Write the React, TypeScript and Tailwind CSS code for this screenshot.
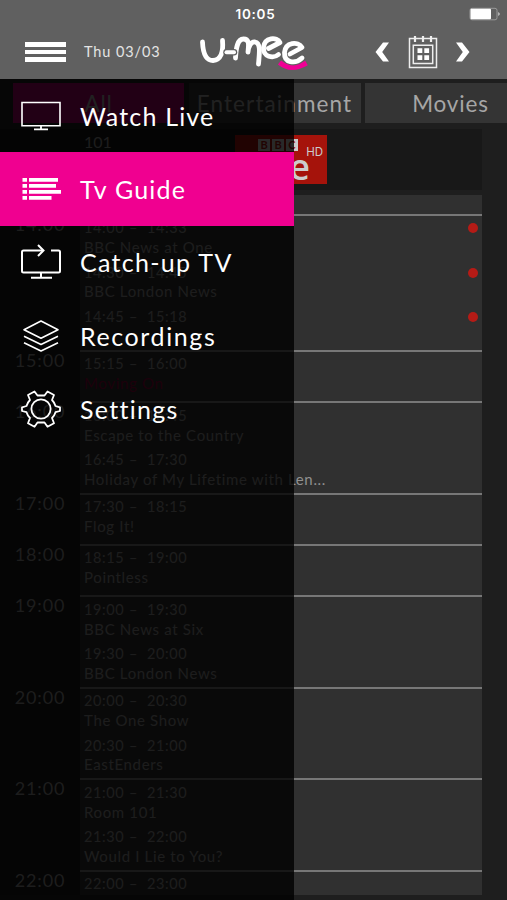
import type { ReactNode } from 'react';

interface Programme {
  start: string;
  end: string;
  title: string;
  catchUp?: boolean;
  active?: boolean;
}

interface Slot {
  hour: string;
  height: string;
  programmes: Programme[];
}

interface MenuItem {
  label: string;
  icon: ReactNode;
  tracking: string;
  active?: boolean;
}

const slots: Slot[] = [
  {
    hour: '14:00',
    height: 'h-[136px]',
    programmes: [
      { start: '14:00', end: '14:33', title: 'BBC News at One', catchUp: true },
      { start: '14:30', end: '14:45', title: 'BBC London News', catchUp: true },
      { start: '14:45', end: '15:18', title: '', catchUp: true },
    ],
  },
  {
    hour: '15:00',
    height: 'h-[51.5px]',
    programmes: [
      { start: '15:15', end: '16:00', title: 'Moving On', active: true },
    ],
  },
  {
    hour: '16:00',
    height: 'h-[91.5px]',
    programmes: [
      { start: '16:00', end: '16:45', title: 'Escape to the Country' },
      {
        start: '16:45',
        end: '17:30',
        title: 'Holiday of My Lifetime with Len...',
      },
    ],
  },
  {
    hour: '17:00',
    height: 'h-[51px]',
    programmes: [{ start: '17:30', end: '18:15', title: 'Flog It!' }],
  },
  {
    hour: '18:00',
    height: 'h-[51.5px]',
    programmes: [{ start: '18:15', end: '19:00', title: 'Pointless' }],
  },
  {
    hour: '19:00',
    height: 'h-[91.5px]',
    programmes: [
      { start: '19:00', end: '19:30', title: 'BBC News at Six' },
      { start: '19:30', end: '20:00', title: 'BBC London News' },
    ],
  },
  {
    hour: '20:00',
    height: 'h-[91.5px]',
    programmes: [
      { start: '20:00', end: '20:30', title: 'The One Show' },
      { start: '20:30', end: '21:00', title: 'EastEnders' },
    ],
  },
  {
    hour: '21:00',
    height: 'h-[91.5px]',
    programmes: [
      { start: '21:00', end: '21:30', title: 'Room 101' },
      { start: '21:30', end: '22:00', title: 'Would I Lie to You?' },
    ],
  },
  {
    hour: '22:00',
    height: 'h-[25.5px]',
    programmes: [{ start: '22:00', end: '23:00', title: '' }],
  },
];

function MonitorIcon() {
  return (
    <svg width="40" height="30" viewBox="0 0 40 30" fill="none" stroke="white">
      <path d="M1 1.5h38v23.2H1z" strokeWidth="1.6" />
      <path d="M20 25v3M13 28.3h14" strokeWidth="1.8" />
    </svg>
  );
}

function GuideIcon() {
  return (
    <svg width="40" height="24" viewBox="0 0 40 24" fill="white">
      <path d="M1.5 1H6v3.7H1.500zM8 1h29v3.700H8zM1.500 7H6v3.700H1.500zM8 7h27v3.700H8zM1.500 13H6v3.700H1.500zM8 13h32v3.700H8zM1.500 19H6v3.700H1.500zM8 19h22.500v3.700H8z" />
    </svg>
  );
}

function CatchUpIcon() {
  return (
    <svg width="40" height="36" viewBox="0 0 40 36" fill="none" stroke="white">
      <path
        d="M30 6.500h7.500q1.500 0 1.500 1.500v19q0 1.500-1.500 1.500h-35Q1 28.500 1 27V8q0-1.500 1.500-1.500H22"
        strokeWidth="2"
      />
      <path d="M17 1l5.500 5.500-5.500 5.500M20 29v4M10 33.700h21" strokeWidth="2" />
    </svg>
  );
}

function StackIcon() {
  return (
    <svg
      width="40"
      height="32"
      viewBox="0 0 40 32"
      fill="none"
      stroke="white"
      strokeWidth="1.6"
      strokeLinejoin="round"
    >
      <path d="M20 1l17 8.700-17 8.600-17-8.600z" />
      <path d="M3 16.200l17 8.300 17-8.300" />
      <path d="M3 22.700l17 8.300 17-8.300" />
    </svg>
  );
}

function GearIcon() {
  return (
    <svg
      width="40"
      height="40"
      viewBox="0 0 40 40"
      fill="none"
      stroke="white"
      strokeWidth="1.8"
      strokeLinejoin="round"
    >
      <circle cx="20" cy="20" r="9.6" />
      <path d="M16.500 6.500h7L26.500 2.500 33 6 31 11Q33.500 13.500 34.500 17L39 18.300V22L34.500 23.200Q33.500 26.500 31 29L33 34.200 26.500 37.700 23.500 33.500H16.500L13.500 37.700 7 34.200 9 29Q6.500 26.500 5.500 23.200L1 22V18.300L5.500 17Q6.500 13.500 9 11L7 6 13.500 2.500z" />
    </svg>
  );
}

function CalendarIcon() {
  return (
    <svg width="30" height="34" viewBox="0 0 30 34" fill="none" stroke="#eee">
      <path d="M1.5 3.5h27v29h-27z" strokeWidth="1.5" />
      <path d="M5.3 10.3h19.400v18.300H5.300z" strokeWidth="1.5" />
      <path d="M7 1v6M15 1v6M23 1v6" strokeWidth="2.2" />
      <path
        d="M9.500 13.200h4.800v4.800H9.500zM16.300 13.200h4.800v4.800h-4.800zM9.500 20.200h4.800v4.800H9.500zM16.300 20.200h4.800v4.800h-4.800z"
        fill="white"
        stroke="none"
      />
    </svg>
  );
}

function Logo() {
  return (
    <svg
      width="112"
      height="40"
      viewBox="0 0 112 40"
      fill="none"
      stroke="white"
      strokeWidth="4.8"
      strokeLinecap="round"
      strokeLinejoin="round"
    >
      <path d="M83.500 30.500Q95 40 110.500 31" stroke="#f00095" strokeWidth="5" strokeLinecap="butt" />
      <path d="M6.500 10C7 22 10 28.500 17 28.500C25 28 27.500 20 26.500 8.500" />
      <path d="M39.500 26C40 17 41 7 47.500 7C54 7 52.500 14 52 20C52.500 14 55 9.500 59 10C65 11 63.500 21 62.500 32" />
      <path d="M30.500 20.300h7.500" stroke="#606060" strokeWidth="6.5" />
      <path d="M30.500 20.300h7.500" strokeWidth="4" />
      <path d="M72.500 16.500L84 10.500C81 4.500 68.500 5 67.500 15.500C67 25 77 27 82.500 22.500" />
      <path
        d="M94 22L106 15.500C102 9 89.500 10 88.500 20.500C88 31 99 32.500 106 26"
        stroke="#606060"
        strokeWidth="7"
      />
      <path d="M94 22L106 15.500C102 9 89.500 10 88.500 20.500C88 31 99 32.500 106 26" />
    </svg>
  );
}

const menuItems: MenuItem[] = [
  { label: 'Watch Live', icon: <MonitorIcon />, tracking: 'tracking-[1.2px]' },
  {
    label: 'Tv Guide',
    icon: <GuideIcon />,
    tracking: 'tracking-[1.2px]',
    active: true,
  },
  { label: 'Catch-up TV', icon: <CatchUpIcon />, tracking: 'tracking-[1.3px]' },
  { label: 'Recordings', icon: <StackIcon />, tracking: 'tracking-[1.6px]' },
  { label: 'Settings', icon: <GearIcon />, tracking: 'tracking-[1.3px]' },
];

function Header() {
  return (
    <header className="h-[79px] bg-[#606060] text-white">
      <div className="grid h-7 grid-cols-3 items-center">
        <span />
        <span className="pl-1 text-center font-['Inter'] text-[13.5px] font-semibold tracking-[0.7px]">
          10:05
        </span>
        <svg className="ml-auto mr-1.5" width="32" height="14" viewBox="0 0 32 14">
          <rect x="1" y="1.3" width="27" height="11.5" rx="2" fill="none" stroke="#999" />
          <rect x="1.5" y="1.8" width="20.5" height="10.5" rx="1" fill="white" />
          <path d="M29.5 5v4q2-2 0-4" fill="white" />
        </svg>
      </div>
      <div className="flex h-[48px] items-center">
        <button
          type="button"
          aria-label="Menu"
          className="ml-[25px] flex w-[41px] flex-col gap-[3px]"
        >
          <span className="h-[4.5px] bg-white" />
          <span className="h-[4.5px] bg-white" />
          <span className="h-[4.5px] bg-white" />
        </button>
        <span className="ml-[18px] w-[112px] whitespace-nowrap text-[14.5px] tracking-[0.9px] text-[#e4e4e4]">
          Thu 03/03
        </span>
        <Logo />
        <svg className="ml-[67px]" width="14" height="20" viewBox="0 0 14 20">
          <path d="M.5 10L8 .5h6L7.200 10l6.800 9.500H8z" fill="white" />
        </svg>
        <span className="ml-[19px]">
          <CalendarIcon />
        </span>
        <svg className="ml-[18px]" width="14" height="20" viewBox="0 0 14 20">
          <path d="M13.500 10L6 .5H0L6.800 10 0 19.500h6z" fill="white" />
        </svg>
      </div>
    </header>
  );
}

function ProgrammeRow({ programme }: { programme: Programme }) {
  return (
    <div className="h-[44.3px] pl-1">
      <div className="flex h-[19.5px] items-center pr-1 text-[14.5px] tracking-[0.6px]">
        <span className="w-[45px]">{programme.start}</span>
        <span className="w-[18px]">–</span>
        <span>{programme.end}</span>
        {programme.catchUp && (
          <span className="ml-auto size-[10px] rounded-full bg-[#b51b16]" />
        )}
      </div>
      <div
        className={`h-[19px] whitespace-nowrap text-[15px] leading-[19px] tracking-[0.65px] ${
          programme.active ? 'text-[#8a0038]' : ''
        }`}
      >
        {programme.title}
      </div>
    </div>
  );
}

function ChannelLogo() {
  return (
    <div className="relative h-[49px] w-[92px] bg-[#a5130b] text-[#ccc]">
      <div className="flex gap-[2px] pl-[23px] pt-[4px]">
        {['B', 'B', 'C'].map((letter, i) => (
          <span
            key={i}
            className="h-[12px] w-[12px] bg-[#ccc] text-center text-[11px] font-bold leading-[12px] text-[#a5130b]"
          >
            {letter}
          </span>
        ))}
      </div>
      <div className="pr-[17px] text-right font-['Open_Sans'] text-[36px] font-semibold leading-[31px]">
        one
      </div>
      <span className="absolute right-[4px] top-[11px] font-['Inter'] text-[11.5px] leading-[13px]">
        HD
      </span>
    </div>
  );
}

function Guide() {
  return (
    <div className="h-[821px] overflow-hidden bg-[#1e1e1e] pt-[3.5px] text-[#909090]">
      <div className="flex h-[40.5px] gap-[4.5px] overflow-hidden pl-[13px] text-[22.5px] leading-[41px] tracking-[0.8px] text-[#a6a6a6]">
        <span className="w-[171px] shrink-0 bg-[#aa006c] text-center">All</span>
        <span className="w-[172px] shrink-0 bg-[#343434] text-center tracking-[1.1px]">
          Entertainment
        </span>
        <span className="w-[171px] shrink-0 bg-[#343434] text-center">Movies</span>
      </div>
      <div className="mt-[6px] flex h-[61px] w-[482px] bg-[#181818] pl-[84px] pt-[6px]">
        <span className="w-[151px] text-[16px] leading-[14px]">101</span>
        <ChannelLogo />
      </div>
      <div className="mt-[5px] flex h-[18.500px]">
        <div className="w-[80px] bg-[#191919]" />
        <div className="w-[402px] bg-[#303030]" />
      </div>
      {slots.map(slot => (
        <div key={slot.hour} className={`flex ${slot.height}`}>
          <div className="w-[80px] bg-[#191919] text-center text-[18px] leading-[21px] tracking-[0.8px]">
            {slot.hour}
          </div>
          <div className="w-[402px] overflow-hidden border-t-2 border-[#777] bg-[#303030] pt-[3px]">
            {slot.programmes.map(programme => (
              <ProgrammeRow key={programme.start} programme={programme} />
            ))}
          </div>
        </div>
      ))}
    </div>
  );
}

function Drawer() {
  return (
    <nav className="absolute left-0 top-[79px] h-[821px] w-[294px] bg-black/80 text-white">
      {menuItems.map(item => (
        <div
          key={item.label}
          className={`flex h-[73.3px] items-center pl-[21px] ${
            item.active ? 'bg-[#f00090]' : ''
          }`}
        >
          <span className="w-[59px]">{item.icon}</span>
          <span className={`whitespace-nowrap pt-0.5 text-[25px] ${item.tracking}`}>
            {item.label}
          </span>
        </div>
      ))}
    </nav>
  );
}

export default function App() {
  return (
    <div className="relative h-[900px] w-[507px] overflow-hidden bg-black font-['Lato',sans-serif]">
      <Header />
      <Guide />
      <Drawer />
    </div>
  );
}
